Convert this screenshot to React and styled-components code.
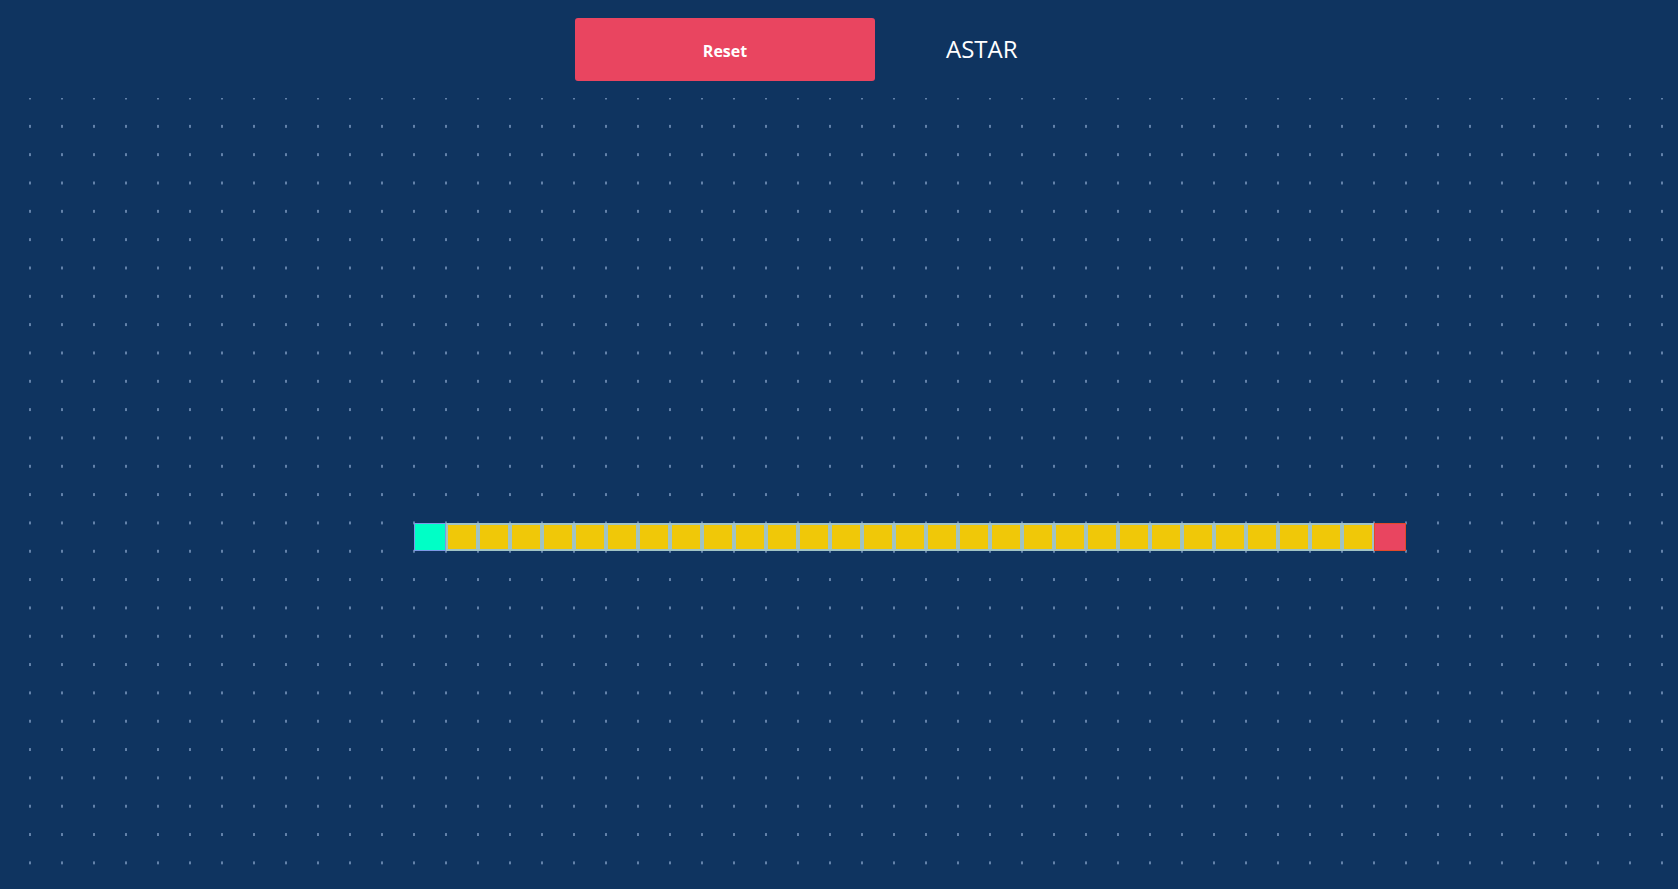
import React from 'react'
import styled, { createGlobalStyle } from 'styled-components'

const GlobalStyle = createGlobalStyle`
  html, body {
    margin: 0;
    padding: 0;
    height: 100%;
    overflow: hidden;
    background: #0f3460;
    font-family: "Open Sans", "Liberation Sans", sans-serif;
  }
  #root {
    height: 100%;
  }
`

const COLS = 51
const ROWS = 28
const CELL_W = 32
const CELL_H = 28.33

const Page = styled.main`
  display: flex;
  flex-direction: column;
  height: 100%;
  background: #0f3460;
`

const Header = styled.header`
  display: flex;
  align-items: center;
  gap: 71px;
  padding: 18px 0 0 575px;
`

const ResetButton = styled.button`
  width: 300px;
  height: 63px;
  padding: 2px 0 0;
  border: none;
  border-radius: 3px;
  background: #e94560;
  color: #ffffff;
  font-family: "Open Sans", "Liberation Sans", sans-serif;
  font-weight: 700;
  font-size: 16px;
  cursor: pointer;
`

const AlgoLabel = styled.span`
  color: #ffffff;
  font-size: 24px;
  font-weight: 400;
  margin-top: -2px;
`

const Board = styled.section`
  flex: 1;
  margin-top: 17px;
  background-image: radial-gradient(circle, #6382aa 1.1px, transparent 1.5px);
  background-size: ${CELL_W}px ${CELL_H}px;
  background-position: 14px -${CELL_H / 2}px;
  padding-left: 30px;
`

const Grid = styled.div`
  display: grid;
  grid-template-columns: repeat(${COLS}, ${CELL_W}px);
  grid-template-rows: repeat(${ROWS}, ${CELL_H}px);
`

const cellColors = {
  start: { fill: '#00ffc6', border: '#7d98e6', width: 1 },
  visited: { fill: '#f0c808', border: '#a0c3c4', width: 2 },
  end: { fill: '#e94560', border: '#e2492a', width: 1 },
}

const Cell = styled.div`
  grid-row: ${p => p.$row};
  grid-column: ${p => p.$col};
  box-sizing: border-box;
  background: ${p => cellColors[p.$type].fill};
  border: ${p => cellColors[p.$type].width}px solid ${p => cellColors[p.$type].border};
`

const pathRow = 16
const startCol = 13
const endCol = 43

const App = () => {
  const cells = []
  for (let c = startCol; c <= endCol; c++) {
    const type = c === startCol ? 'start' : c === endCol ? 'end' : 'visited'
    cells.push(<Cell key={c} $row={pathRow} $col={c} $type={type} />)
  }

  return (
    <Page>
      <GlobalStyle />
      <Header>
        <ResetButton>Reset</ResetButton>
        <AlgoLabel>ASTAR</AlgoLabel>
      </Header>
      <Board>
        <Grid>{cells}</Grid>
      </Board>
    </Page>
  )
}

export default App
